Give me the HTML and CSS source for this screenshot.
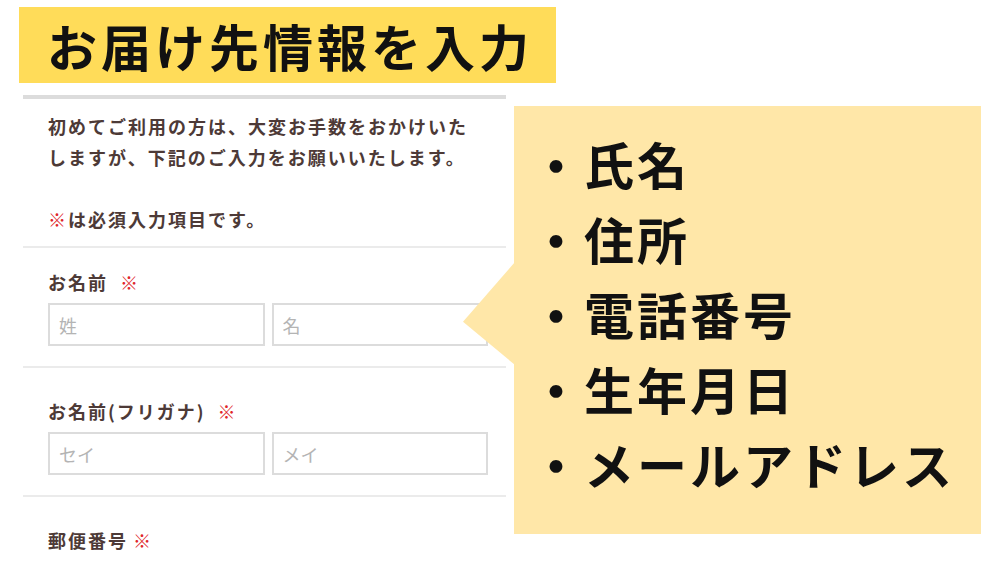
FILE: index.html
```html
<!DOCTYPE html>
<html lang="ja">

<head>
  <meta charset="UTF-8">
  <meta name="viewport" content="width=device-width, initial-scale=1.0">
  <title>お届け先情報を入力</title>
  <link rel="stylesheet" href="styles.css">
</head>

<body>
  <header class="banner">
    <h1>お届け先情報を入力</h1>
  </header>

  <main class="layout">
    <form class="entry">
      <p class="entry__intro">
        初めてご利用の方は、大変お手数をおかけいた<br>
        しますが、下記のご入力をお願いいたします。<br>
        <br>
        <span class="req">※</span>は必須入力項目です。
      </p>

      <div class="field field--first">
        <label class="field__label">お名前<span class="req req--gap">※</span></label>
        <div class="field__inputs">
          <input type="text" placeholder="姓">
          <input type="text" placeholder="名">
        </div>
      </div>

      <div class="field">
        <label class="field__label">お名前(フリガナ)<span class="req req--gap">※</span></label>
        <div class="field__inputs">
          <input type="text" placeholder="セイ">
          <input type="text" placeholder="メイ">
        </div>
      </div>

      <div class="field">
        <label class="field__label">郵便番号<span class="req req--near">※</span></label>
      </div>
    </form>

    <aside class="callout">
      <ul>
        <li>・氏名</li>
        <li>・住所</li>
        <li>・電話番号</li>
        <li>・生年月日</li>
        <li>・メールアドレス</li>
      </ul>
    </aside>
  </main>
</body>

</html>
```

FILE: styles.css
```css
body {
  margin: 0;
  width: 1000px;
  height: 563px;
  overflow: hidden;
  background: #fff;
  font-family: "Noto Sans CJK JP", "Noto Sans", sans-serif;
}

.banner {
  width: 537px;
  height: 76px;
  margin: 7px 0 0 19px;
  padding-left: 28px;
  box-sizing: border-box;
  display: flex;
  align-items: center;
  background-color: #ffdc59;
}

.banner h1 {
  margin: 0;
  font-size: 50px;
  font-weight: 700;
  letter-spacing: 4px;
  line-height: 1;
  color: #111;
  white-space: nowrap;
}

.layout {
  display: flex;
  align-items: flex-start;
  margin-top: 12px;
}

/* left: the form */
.entry {
  width: 483px;
  margin-left: 23px;
  border-top: 4px solid #dcdcdc;
  color: #4d3a37;
  font-weight: 700;
  font-size: 18px;
  letter-spacing: 2px;
}

.entry__intro {
  margin: 0;
  padding: 12px 0 11px 25px;
  line-height: 31px;
  white-space: nowrap;
}

.req {
  color: #e0262a;
  font-weight: 400;
}

.req--gap {
  margin-left: 12px;
}

.req--near {
  margin-left: 5px;
}

.field {
  border-top: 2px solid #ebebeb;
  padding: 31px 18px 20px 25px;
}

.field--first {
  padding-top: 22px;
}

.field__label {
  display: block;
  line-height: 24px;
  margin-bottom: 9px;
}

.field__inputs {
  display: grid;
  grid-template-columns: 1fr 1fr;
  column-gap: 7px;
}

.field__inputs input {
  width: 100%;
  min-width: 0;
  height: 43px;
  box-sizing: border-box;
  margin: 0;
  padding: 0 9px;
  border: 2px solid #dcdcdc;
  border-radius: 0;
  font-family: inherit;
  font-size: 18px;
  outline: none;
}

.field__inputs input::placeholder {
  color: #b4b4b4;
}

/* right: the yellow note */
.callout {
  position: relative;
  width: 467px;
  height: 428px;
  margin: 11px 0 0 8px;
  padding: 20px 0 0 17px;
  box-sizing: border-box;
  background-color: #ffe7a8;
}

.callout::before {
  content: "";
  position: absolute;
  left: -51px;
  top: 156px;
  width: 52px;
  height: 103px;
  background-color: #ffe7a8;
  clip-path: polygon(100% 0, 0 58%, 100% 100%);
}

.callout ul {
  margin: 0;
  padding: 0;
  list-style: none;
}

.callout li {
  font-size: 50px;
  font-weight: 700;
  letter-spacing: 3px;
  line-height: 75px;
  color: #111;
  white-space: nowrap;
}
```
